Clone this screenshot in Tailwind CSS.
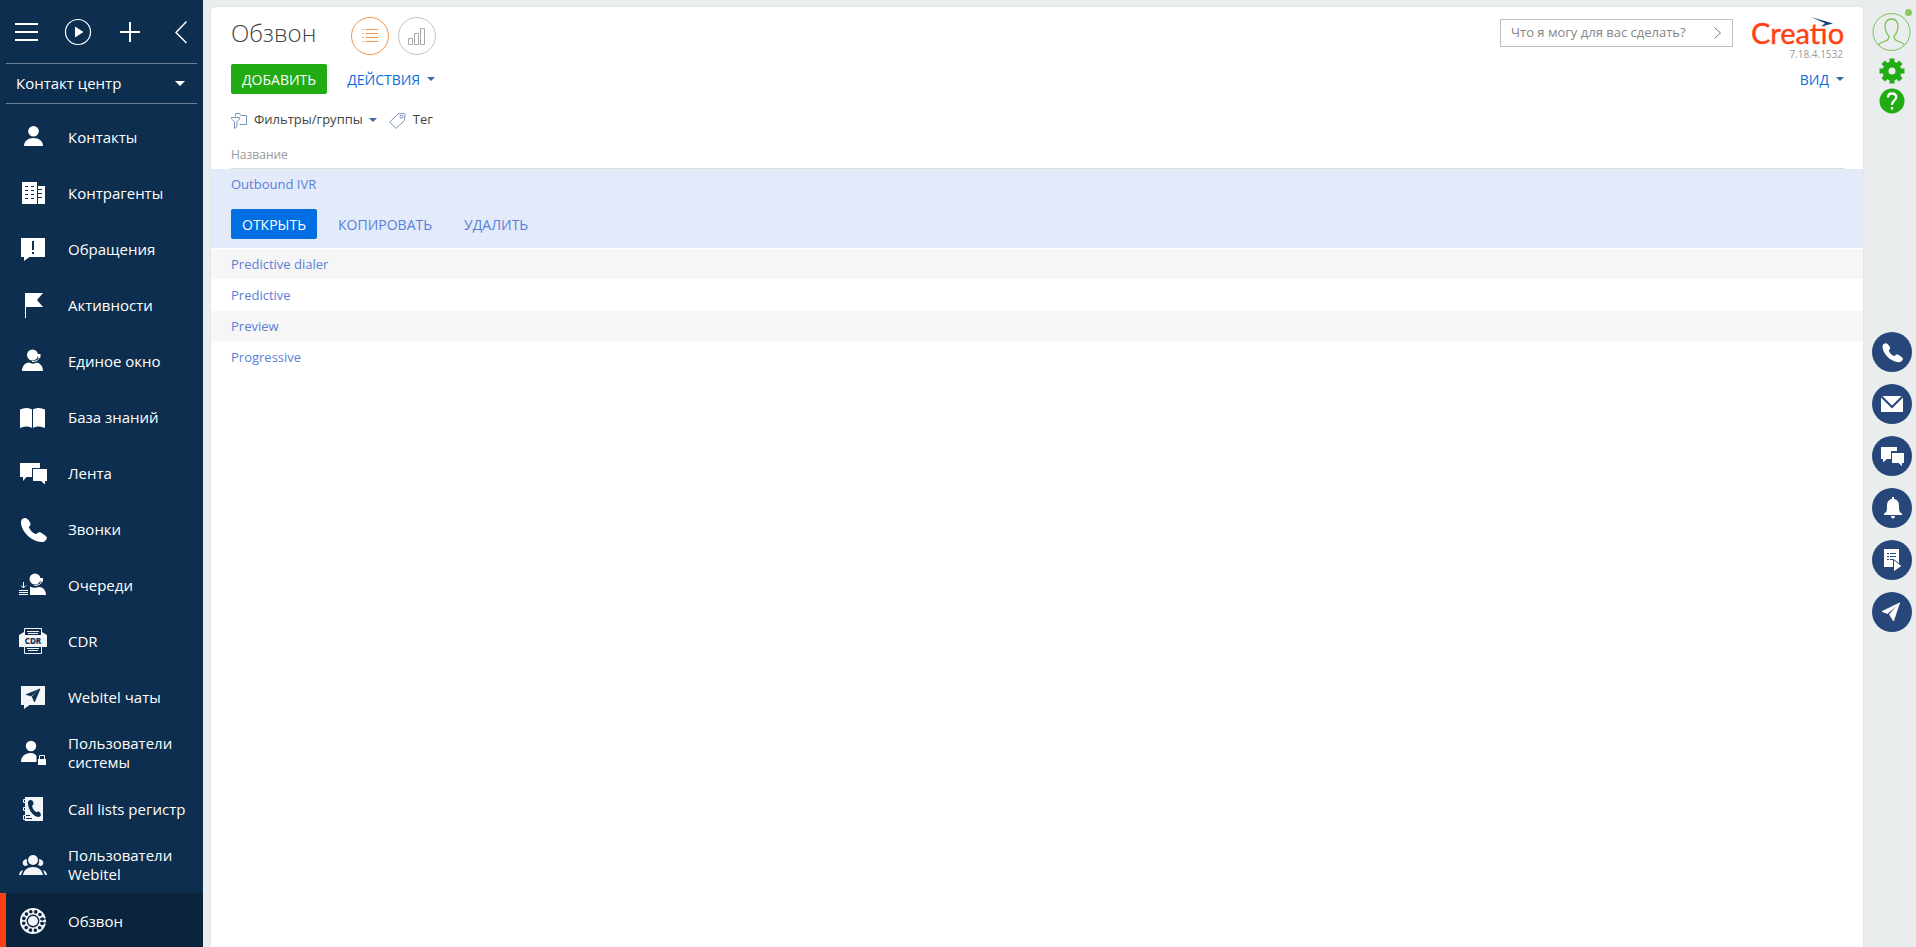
<!doctype html>
<html lang="ru">
    <head>
        <meta charset="UTF-8" />
        <meta name="viewport" content="width=device-width, initial-scale=1.0" />
        <title>Обзвон</title>
        <script src="https://cdn.jsdelivr.net/npm/@tailwindcss/browser@4"></script>
    </head>
    <body class="flex h-screen overflow-hidden bg-[#e9edee] font-['Open_Sans',sans-serif] text-[#444]">
        <!-- Left menu -->
        <aside class="flex w-[203px] shrink-0 flex-col bg-[#0d2e4e] text-white">
            <div class="mx-[6px] flex h-[64px] shrink-0 items-center gap-[25px] border-b border-[#6d8093] pl-[9px]">
                <button type="button" aria-label="Меню">
                    <svg class="h-6 w-6" viewBox="0 0 24 24" fill="none" stroke="currentColor" stroke-width="2"><path d="M0 4h23M0 12h23M0 20h23" /></svg>
                </button>
                <button type="button" aria-label="Запустить процесс">
                    <svg class="h-7 w-7" viewBox="0 0 28 28" fill="none" stroke="currentColor"><circle cx="14" cy="14" r="12.500" stroke-width="1.200" /><path d="M11 8.500v11l8.500-5.500z" fill="currentColor" stroke="none" /></svg>
                </button>
                <button type="button" aria-label="Создать">
                    <svg class="h-6 w-6" viewBox="0 0 24 24" fill="none" stroke="currentColor" stroke-width="2"><path d="M3 12h20M13 2v20" /></svg>
                </button>
                <button type="button" aria-label="Свернуть" class="pl-[9px]">
                    <svg class="h-6 w-3" viewBox="0 0 12 24" fill="none" stroke="currentColor" stroke-width="1.500"><path d="M11.500 1.500 1 12.500l10.500 10.500" /></svg>
                </button>
            </div>
            <button type="button" class="mx-[6px] flex h-[40px] shrink-0 items-center justify-between border-b border-[#6d8093] pr-[12px] pl-[10px] text-[15px]">
                Контакт центр
                <svg class="h-[5px] w-[10px]" viewBox="0 0 10 5" fill="currentColor"><path d="M0 0h10L5 5z" /></svg>
            </button>
            <nav class="mt-[5px] text-[15px] leading-[19px]">
                <a href="#" class="flex h-[56px] items-center gap-[21px] pl-[19px]">
                    <svg class="size-7 shrink-0" viewBox="0 0 28 28" fill="currentColor"><circle cx="14.500" cy="8.300" r="5.300" /><path d="M5 23c0-5 4-8 9.500-8s9.500 3 9.500 8z" /></svg>
                    <span>Контакты</span>
                </a>
                <a href="#" class="flex h-[56px] items-center gap-[21px] pl-[19px]">
                    <svg class="size-7 shrink-0" viewBox="0 0 28 28" fill="currentColor"><path d="M3 3h15v22H3zM19 7h7v18h-7z" /><path d="M6 7.500h3m3 0h3M6 11.500h3m3 0h3M6 15.500h3m3 0h3M6 19.500h3m3 0h3M19 10.500h4M19 14.500h4M19 18.500h4" stroke="#0d2e4e" /></svg>
                    <span>Контрагенты</span>
                </a>
                <a href="#" class="flex h-[56px] items-center gap-[21px] pl-[19px]">
                    <svg class="size-7 shrink-0" viewBox="0 0 28 28" fill="currentColor"><path d="M2 3h24v19H10.500L5 26v-4H2z" /><path d="M13 6h2v9h-2zM13 17h2v2h-2z" fill="#0d2e4e" /></svg>
                    <span>Обращения</span>
                </a>
                <a href="#" class="flex h-[56px] items-center gap-[21px] pl-[19px]">
                    <svg class="size-7 shrink-0" viewBox="0 0 28 28" fill="currentColor"><path d="M6 2h18l-6 7 6 7H7v11H6z" /></svg>
                    <span>Активности</span>
                </a>
                <a href="#" class="flex h-[56px] items-center gap-[21px] pl-[19px]">
                    <svg class="size-7 shrink-0" viewBox="0 0 28 28" fill="currentColor"><circle cx="13.500" cy="8" r="5.500" /><path d="M19 7h2.500v3.500H19zM3 24c0-5 3-8 7-8.500 3 1.500 5 1.500 8 0 3.500 1 6 4 6 8.500z" /><path d="M20.500 10c-.8 3-3.500 5-7.500 4.500" fill="none" stroke="currentColor" /></svg>
                    <span>Единое окно</span>
                </a>
                <a href="#" class="flex h-[56px] items-center gap-[21px] pl-[19px]">
                    <svg class="size-7 shrink-0" viewBox="0 0 28 28" fill="currentColor"><path d="M1 6.500c4-2 8.500-2 12 0V25c-3.500-2-8-2-12 0zM26 6.500c-4-2-8.500-2-12 0V25c3.500-2 8-2 12 0z" /></svg>
                    <span>База знаний</span>
                </a>
                <a href="#" class="flex h-[56px] items-center gap-[21px] pl-[19px]">
                    <svg class="size-7 shrink-0" viewBox="0 0 28 28" fill="currentColor"><path d="M1 4h20v5h-8v9H7.500L4 22v-4H1zM14 10h14v12h-2v3.500L22 22h-8z" /></svg>
                    <span>Лента</span>
                </a>
                <a href="#" class="flex h-[56px] items-center gap-[21px] pl-[19px]">
                    <svg class="size-7 shrink-0" viewBox="0 0 28 28" fill="currentColor"><path d="M3.500 3.800c2-1.500 4-1 5.500.7 2 2.300 3.200 4.700 2.200 6-.9 1-1.700 1.300-1 2.600 1.300 2.700 3.300 4.400 5.700 5.700 1.200.6 1.800 0 2.700-.9 1.500-1.200 3.600-.3 5.400 1 2.500 1.600 4.700 3 3.600 5-1 2.100-2.900 3.200-5 3.100C12 26.500 2.500 16.500 2 8c-.1-1.700.3-3.200 1.500-4.200z" /></svg>
                    <span>Звонки</span>
                </a>
                <a href="#" class="flex h-[56px] items-center gap-[21px] pl-[19px]">
                    <svg class="size-7 shrink-0" viewBox="0 0 28 28" fill="currentColor"><circle cx="16" cy="8" r="5.500" /><path d="M21 7h3v3.500h-3zM11 24v-8.500c3 1.500 6 1.500 9 .5 4 0 7 3.500 7 8z" /><path d="M23 10c-1 3-3.500 4.500-7.500 4.500M4.500 11v6M2 14.500 4.500 17 7 14.500M0 19.500h9M0 21.500h9M0 23.500h9" fill="none" stroke="currentColor" /></svg>
                    <span>Очереди</span>
                </a>
                <a href="#" class="flex h-[56px] items-center gap-[21px] pl-[19px]">
                    <svg class="size-7 shrink-0" viewBox="0 0 28 28" fill="none" stroke="#f3f5f8"><path d="M5.500 8V1.500h17V8M5.500 20v6.500h17V20M8 4.500h12M9 6.500h10M8 21.500h12M9 23.500h10" /><path d="M0 8l5-3v3zM28 8l-5-3v3zM0 8h28v12H0z" fill="#f3f5f8" stroke="none" /><text x="14" y="17" text-anchor="middle" font-family="'Liberation Sans Narrow', 'Open Sans', sans-serif" font-weight="700" font-size="8" fill="#0d2e4e" stroke="#0d2e4e" stroke-width=".2">CDR</text></svg>
                    <span>CDR</span>
                </a>
                <a href="#" class="flex h-[56px] items-center gap-[21px] pl-[19px]">
                    <svg class="size-7 shrink-0" viewBox="0 0 28 28" fill="#f3f5f8"><path d="M2 3h24v19H10.500L5 26v-4H2z" /><path d="M21 6 7 11.500l5 1.500zM21 6l-8 7.500 2.500 5.500z" fill="#0d2e4e" stroke="#0d2e4e" stroke-width=".6" /></svg>
                    <span>Webitel чаты</span>
                </a>
                <a href="#" class="flex h-[56px] items-center gap-[21px] pl-[19px]">
                    <svg class="size-7 shrink-0" viewBox="0 0 28 28" fill="currentColor"><circle cx="12" cy="7" r="5.200" /><path d="M2 23c0-5.500 4-9 9.500-9 3 0 5 1 6 3v6zM19 20h8v6h-8z" /><path d="M20.500 20v-3.500h5V20" fill="none" stroke="currentColor" /></svg>
                    <span>Пользователи системы</span>
                </a>
                <a href="#" class="flex h-[56px] items-center gap-[21px] pl-[19px]">
                    <svg class="size-7 shrink-0" viewBox="0 0 28 28" fill="#f3f5f8"><path d="M6 2h18v24H6z" /><path d="M7 4.500H4.500v3H7M7 12.500H4.500v3H7M7 20.500H4.500v4H7" fill="none" stroke="#f3f5f8" /><path d="M11 5c2-.5 3.500 1.500 3.500 3.500 0 1.500-1.500 1.500-1.300 3 .5 2.500 1.800 4 3.500 5.300 1.300.8 1.800-.8 3.300 0 1.500.9 2.500 3 1.500 4.200-1.500 1.600-4 1-6-.5-4-3-6.500-8-6.500-12.500C9 6.500 9.500 5.300 11 5z" fill="#0d2e4e" /><path d="M7 20.500h4M7 23.500h6" stroke="#0d2e4e" /></svg>
                    <span>Call lists регистр</span>
                </a>
                <a href="#" class="flex h-[56px] items-center gap-[21px] pl-[19px]">
                    <svg class="size-7 shrink-0" viewBox="0 0 28 28" fill="#f3f5f8"><circle cx="14" cy="9" r="5" /><path d="M4 24c.8-5 4.500-8 10-8s9.200 3 10 8zM8 8c-3 .2-4.500 2.200-4.300 4.500C4 14 5 15 6.500 15l2.500-1c-1-1.500-1.500-3.500-1-6zM20 8c3 .2 4.500 2.200 4.300 4.500C24 14 23 15 21.500 15L19 14c1-1.500 1.500-3.500 1-6zM0 24c.3-2.500 1.500-4.300 4-5l-2 5zM28 24c-.3-2.500-1.500-4.300-4-5l2 5z" /></svg>
                    <span>Пользователи Webitel</span>
                </a>
                <a href="#" aria-current="page" class="flex h-[56px] items-center gap-[21px] border-l-6 border-[#ff4013] bg-[#0a243d] pl-[13px]">
                    <svg class="size-7 shrink-0" viewBox="0 0 28 28" fill="none" stroke="#f3f5f8"><circle cx="14" cy="14" r="9.700" stroke-width="6.600" /><circle cx="14" cy="14" r="9.500" stroke="#0a243d" stroke-width="3.600" stroke-linecap="round" stroke-dasharray="0 4.974" stroke-dashoffset="2.487" /><circle cx="14" cy="14" r="5" fill="#f3f5f8" stroke="none" /><path d="M21 12h7M21 16h7" stroke="#0a243d" /></svg>
                    <span>Обзвон</span>
                </a>
            </nav>
        </aside>

        <!-- Section content -->
        <main class="mt-[7px] ml-[8px] min-w-0 flex-1 rounded-t-sm bg-white shadow-[0_0_1px_#b5babd]">
            <header class="flex h-[57px] items-start justify-between pr-[18px] pl-[20px]">
                <div class="flex items-center gap-[9px] pt-[10px]">
                    <h1 class="mr-[26px] pb-[6px] text-[24px] leading-[32px] font-light">Обзвон</h1>
                    <button type="button" aria-label="Список" class="flex size-[38px] items-center justify-center rounded-full border border-[#f3964b] text-[#f3964b]">
                        <svg class="h-4 w-4" viewBox="0 0 16 16" fill="none" stroke="currentColor"><path d="M0 1.500h1.500m2 0H16M0 5.500h1.500m2 0H16M0 9.500h1.500m2 0H16M0 13.500h1.500m2 0H16" /></svg>
                    </button>
                    <button type="button" aria-label="Аналитика" class="flex size-[38px] items-center justify-center rounded-full border border-[#c4c4c4] text-[#a9a9a9]">
                        <svg class="h-[18px] w-[18px]" viewBox="0 0 18 18" fill="none" stroke="currentColor"><path d="M.5 11.500h4v6h-4zM6.500 6.500h4v11h-4zM12.500 1.500h4v16h-4z" /></svg>
                    </button>
                </div>
                <div class="flex items-start pt-[6px]">
                    <form class="mt-[6px] mr-[18px] flex h-[28px] w-[233px] items-center border border-[#bfbfbf] pr-[11px] pl-[10px]">
                        <input type="text" aria-label="Команда" placeholder="Что я могу для вас сделать?" class="min-w-0 flex-1 text-[13px] outline-none placeholder:text-[#858585]" />
                        <button type="submit" aria-label="Выполнить">
                            <svg class="h-3 w-[7px]" viewBox="0 0 7 12" fill="none" stroke="#777"><path d="m.5.500 6 5.500-6 5.500" /></svg>
                        </button>
                    </form>
                    <div class="text-right">
                        <svg class="h-[36px] w-[94px]" viewBox="0 0 94 36" role="img" aria-label="Creatio">
                            <text x="0" y="31" font-family="Lato, sans-serif" font-size="29" fill="#ff4013" stroke="#ff4013" stroke-width=".4">Creatio</text>
                            <path d="M71 6h7v7.500h-7z" fill="#fff" />
                            <path d="M60 4l22 6.500-12 3 4-3.300z" fill="#14417b" />
                        </svg>
                        <p class="pr-[2px] text-[10px] leading-[10px] text-[#999]">7.18.4.1532</p>
                    </div>
                </div>
            </header>
            <div class="flex items-center justify-between pr-[19px] pl-[20px]">
                <div class="flex items-center gap-[20px]">
                    <button type="button" class="h-[30px] rounded-xs bg-[#22ac14] px-[11px] text-[14px] text-white">ДОБАВИТЬ</button>
                    <button type="button" class="flex items-center gap-[7px] text-[14px] text-[#0d6be0]">
                        ДЕЙСТВИЯ
                        <svg class="h-1 w-2" viewBox="0 0 8 4" fill="#3f669f"><path d="M0 0h8L4 4z" /></svg>
                    </button>
                </div>
                <button type="button" class="flex items-center gap-[7px] text-[14px] text-[#0d6be0]">
                    ВИД
                    <svg class="h-1 w-2" viewBox="0 0 8 4" fill="#3f669f"><path d="M0 0h8L4 4z" /></svg>
                </button>
            </div>
            <div class="flex h-[50px] items-center gap-[12px] pt-[2px] pl-[20px] text-[13px]">
                <button type="button" class="flex items-center gap-[6px]">
                    <svg class="h-[17px] w-[17px]" viewBox="0 0 17 17" fill="none" stroke="#7a93b8"><path d="M4.500 4.500v-3h4l1.500 2h5.500v9h-7M.5 5.500h8v1.500L6 9.500v5l-2.500 2v-7L.5 7z" /></svg>
                    Фильтры/группы
                    <svg class="h-1 w-2" viewBox="0 0 8 4" fill="#3f669f"><path d="M0 0h8L4 4z" /></svg>
                </button>
                <button type="button" class="flex items-center gap-[7px]">
                    <svg class="h-[17px] w-[17px]" viewBox="0 0 17 17" fill="none" stroke="#7a93b8"><path d="M9 2 15 1.500l1 .8-.5 6.200L7 16.500.7 10z" /><circle cx="12.500" cy="4.800" r="1.500" /></svg>
                    Тег
                </button>
            </div>
            <table class="w-full border-collapse text-left text-[13px] text-[#5a7fd8]">
                <thead>
                    <tr>
                        <th class="p-0 pr-[19px] pl-[20px] font-normal">
                            <div class="h-[25px] border-b border-[#dcdcdc] pt-[2px] text-[12px] leading-[18px] text-[#999]">Название</div>
                        </th>
                    </tr>
                </thead>
                <tbody>
                    <tr class="border-b border-white bg-[#e3eafa]">
                        <td class="px-[20px] pt-[5px] pb-[9px]">
                            <a href="#" class="block leading-[20px]">Outbound IVR</a>
                            <div class="mt-[15px] flex items-center gap-[21px] text-[14px]">
                                <button type="button" class="h-[30px] rounded-xs bg-[#006fe3] px-[11px] text-white">ОТКРЫТЬ</button>
                                <button type="button" class="mr-[11px]">КОПИРОВАТЬ</button>
                                <button type="button">УДАЛИТЬ</button>
                            </div>
                        </td>
                    </tr>
                    <tr class="h-[31px] border-b border-white bg-[#f6f6f6]"><td class="px-[20px] pt-[2px]"><a href="#">Predictive dialer</a></td></tr>
                    <tr class="h-[31px] border-b border-white"><td class="px-[20px] pt-[2px]"><a href="#">Predictive</a></td></tr>
                    <tr class="h-[31px] border-b border-white bg-[#f6f6f6]"><td class="px-[20px] pt-[2px]"><a href="#">Preview</a></td></tr>
                    <tr class="h-[31px] border-b border-white"><td class="px-[20px] pt-[2px]"><a href="#">Progressive</a></td></tr>
                </tbody>
            </table>
        </main>

        <!-- Communication panel -->
        <aside class="flex w-[53px] shrink-0 flex-col items-center pt-[12px] pr-[4px] pl-[9px]">
            <button type="button" aria-label="Профиль" class="relative">
                <svg class="size-10" viewBox="0 0 40 40" fill="none" stroke="#7ac152"><circle cx="19.500" cy="20" r="18.500" /><path d="M6.500 33c1.500-2 4-3 7-4 3-1 3.500-2.500 3.500-5-2.500-2-3.500-5-4-9 0-5.500 3-8 6.500-8s6.500 2.500 6.500 8c-.5 4-1.500 7-4 9 0 2.500.5 4 3.500 5s5.500 2 7 4" stroke-width="1.300" /></svg>
                <span class="absolute -top-[3px] right-0 size-[7px] rounded-full bg-[#86cb60]"></span>
            </button>
            <button type="button" aria-label="Настройки" class="mt-[6px]">
                <svg class="size-[26px]" viewBox="0 0 26 26" fill="none" stroke="#22ac14"><circle cx="13" cy="13" r="6.500" stroke-width="6" /><path d="M13 5V.5M13 21v4.500M5 13H.5M21 13h4.500M7.300 7.300 4.200 4.200M18.700 18.700l3.100 3.100M7.300 18.700l-3.100 3.100M18.700 7.300l3.100-3.100" stroke-width="5" /></svg>
            </button>
            <button type="button" aria-label="Справка" class="mt-[4px]">
                <svg class="size-[26px]" viewBox="0 0 26 26" fill="none" stroke="#fff"><circle cx="13" cy="13" r="12.500" fill="#22ac14" stroke="none" /><path d="M9 9.500C9 7 10.500 5.500 13 5.500s4.200 1.500 4.200 3.700C17.200 12.500 13 12.500 13 17M13 19v2.500" stroke-width="2.300" /></svg>
            </button>
            <div class="mt-[218px] flex flex-col gap-[12px] text-white">
                <button type="button" aria-label="Звонки" class="flex size-10 items-center justify-center rounded-full bg-[#274679]">
                    <svg class="size-[22px]" viewBox="0 0 28 28" fill="currentColor"><path d="M3.500 3.800c2-1.500 4-1 5.500.7 2 2.300 3.200 4.700 2.200 6-.9 1-1.700 1.300-1 2.600 1.300 2.700 3.300 4.400 5.700 5.700 1.200.6 1.800 0 2.700-.9 1.500-1.200 3.600-.3 5.400 1 2.500 1.600 4.700 3 3.600 5-1 2.100-2.900 3.200-5 3.100C12 26.500 2.500 16.500 2 8c-.1-1.700.3-3.200 1.500-4.200z" /></svg>
                </button>
                <button type="button" aria-label="Почта" class="flex size-10 items-center justify-center rounded-full bg-[#274679]">
                    <svg class="h-4 w-[22px]" viewBox="0 0 22 16"><path d="M0 0h22v16H0z" fill="currentColor" /><path d="M0 0l11 11L22 0" fill="none" stroke="#274679" stroke-width="2" /></svg>
                </button>
                <button type="button" aria-label="Лента" class="flex size-10 items-center justify-center rounded-full bg-[#274679]">
                    <svg class="h-5 w-6" viewBox="0 0 24 20" fill="currentColor"><path d="M1 1h16v4h-6v8H7l-4 3.500V13H1zM12 7h12v10h-2v3l-3.500-3H12z" /></svg>
                </button>
                <button type="button" aria-label="Уведомления" class="flex size-10 items-center justify-center rounded-full bg-[#274679]">
                    <svg class="ml-[2px] h-[22px] w-[18px]" viewBox="0 0 18 22" fill="currentColor"><path d="M8 0h2v2c3.500.5 5 3 5 7 0 5 .5 6.500 3 7.500V18H0v-1.500c2.500-1 3-2.500 3-7.500 0-4 1.500-6.500 5-7zM7 19h4c0 1.500-.8 2.500-2 2.500S7 20.500 7 19z" /></svg>
                </button>
                <button type="button" aria-label="Задачи процессов" class="flex size-10 items-center justify-center rounded-full bg-[#274679]">
                    <svg class="ml-[2px] h-[23px] w-[18px]" viewBox="0 0 18 23"><path d="M0 0h15v18H0z" fill="currentColor" /><path d="M3 4.500h2m1 0h6M3 7.500h2m1 0h6M3 10.500h2m1 0h3" stroke="#274679" /><path d="M9.500 10.500v12.500l8.500-6z" fill="currentColor" stroke="#274679" /></svg>
                </button>
                <button type="button" aria-label="Чаты" class="flex size-10 items-center justify-center rounded-full bg-[#274679]">
                    <svg class="-ml-[2px] size-5" viewBox="0 0 20 20" fill="currentColor" stroke="currentColor" stroke-width=".8" stroke-linejoin="round"><path d="M18.500 1 1 9.500l5.500 2zM18.500 1 8.500 12.500l4 6.500z" /></svg>
                </button>
            </div>
        </aside>
    </body>
</html>
